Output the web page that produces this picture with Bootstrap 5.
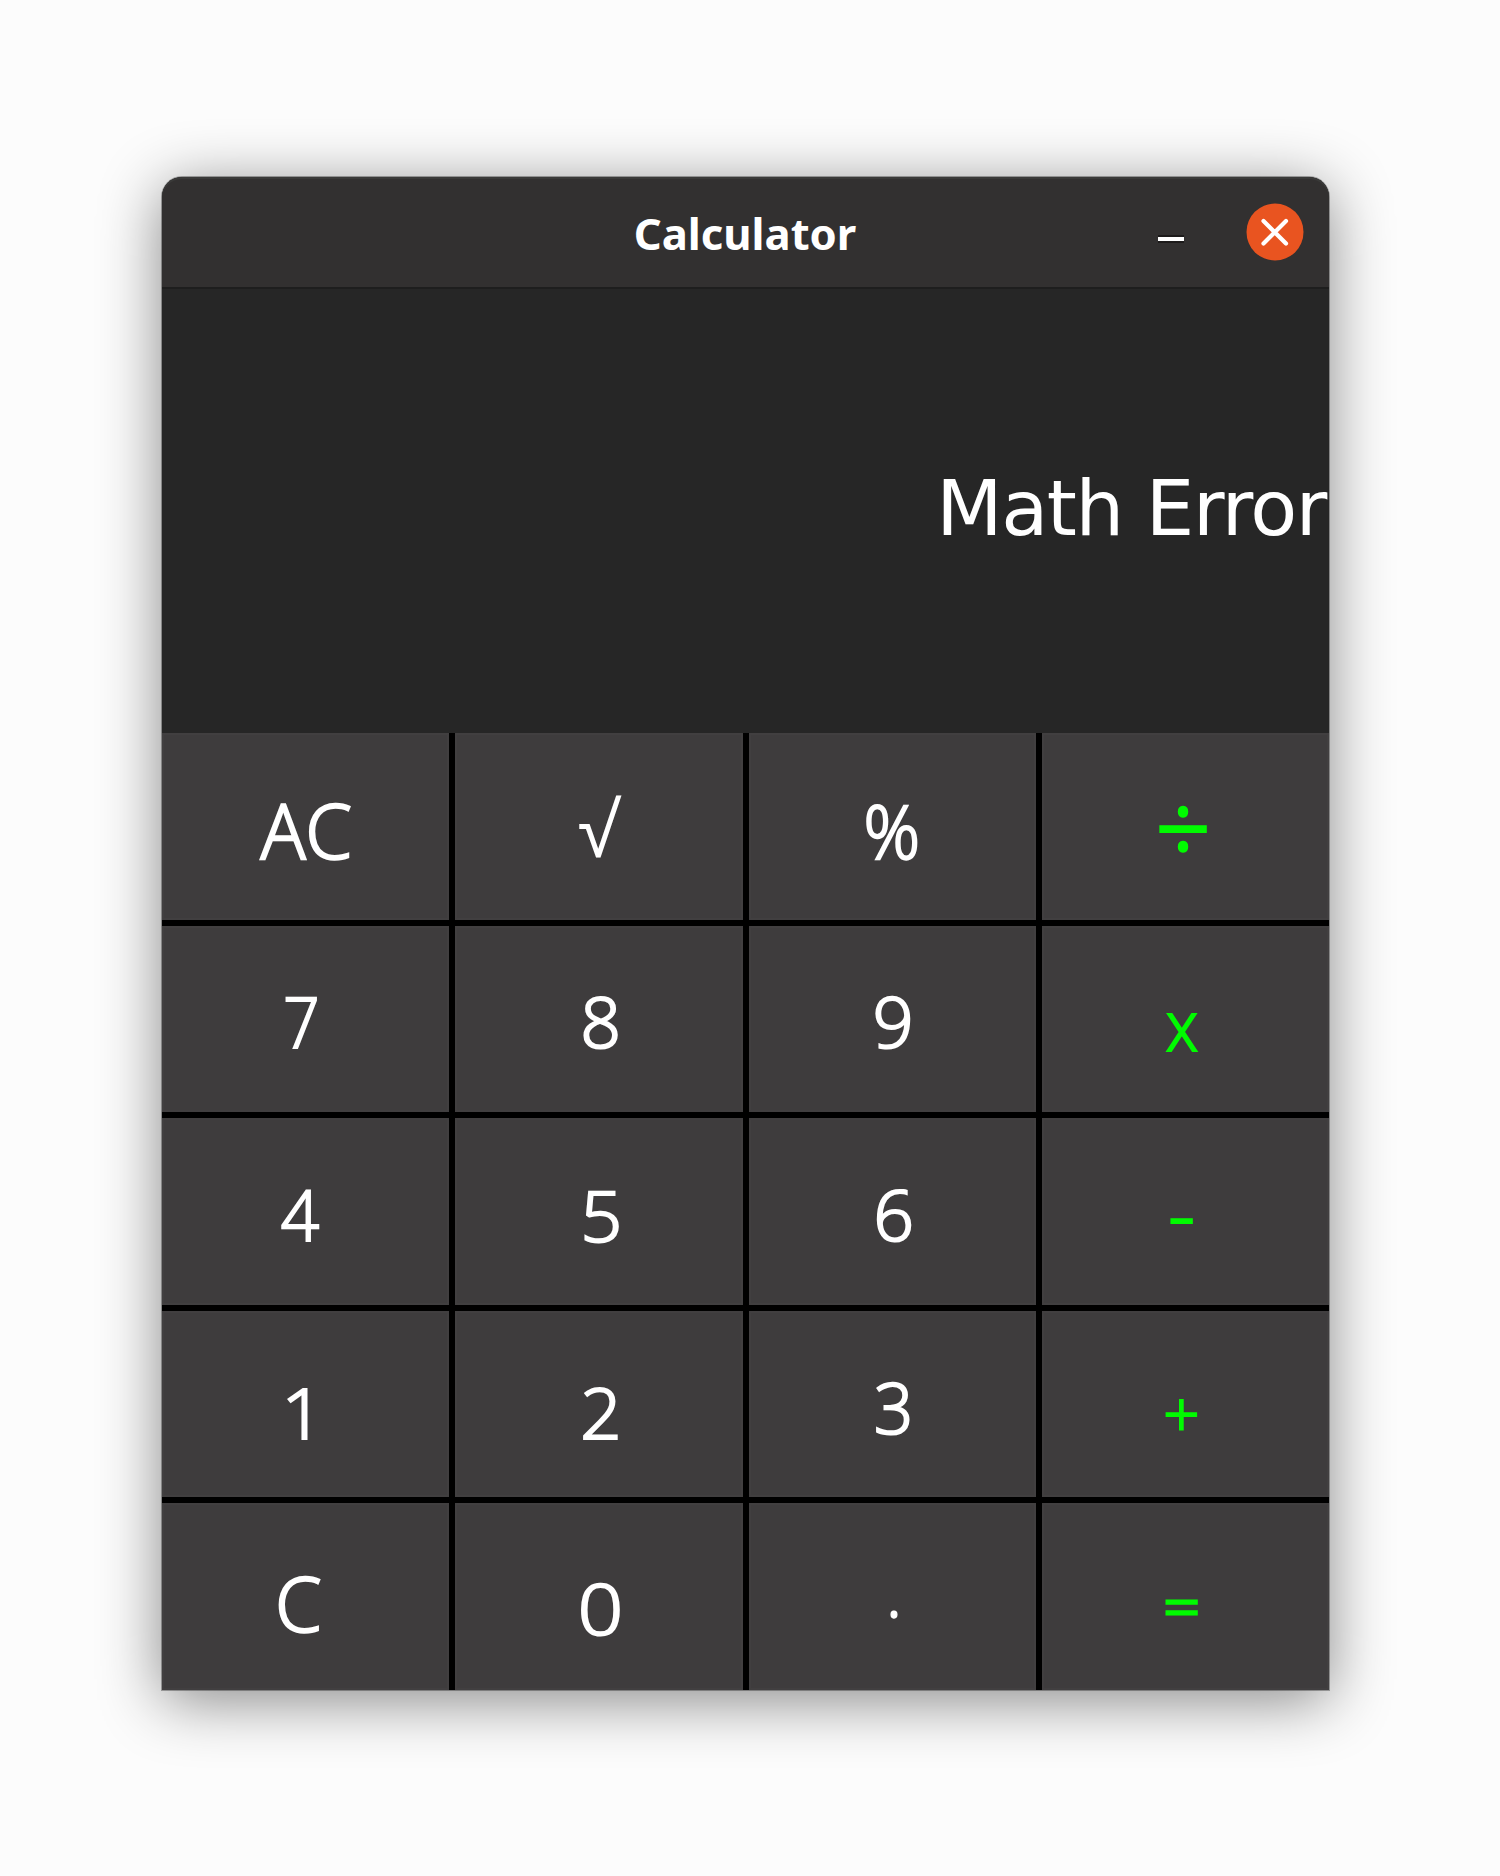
<!DOCTYPE html>
<html lang="en">
<head>
<meta charset="utf-8">
<meta name="viewport" content="width=device-width, initial-scale=1">
<title>Calculator</title>
<link href="https://cdn.jsdelivr.net/npm/bootstrap@5.3.0/dist/css/bootstrap.min.css" rel="stylesheet">
<style>
  body { background: #fcfcfc; padding: 177px 171px 186px 162px; }
  .calc-window { width: 1167px; height: 1513px; background: #262626; border-radius: 20px 20px 0 0;
    box-shadow: 0 0 0 1px rgba(0,0,0,.3), 0 10px 62px rgba(0,0,0,.47); }
  .titlebar { height: 112px; background: #323030; border-bottom: 2px solid #1e1e1e;
    box-shadow: inset 0 2px 0 #3a3a39; border-radius: 20px 20px 0 0; }
  .titlebar h1 { font: 700 43.6px/1 "Noto Sans", sans-serif; padding: 4px 1px 0 0; }
  .window-buttons { right: 25.5px; top: 26px; gap: 62px; }
  .win-min { width: 26px; height: 58px; }
  .win-close { width: 58px; height: 58px; }
  .screen { height: 444px; background: #262626; color: #fff; padding: 0 3px 4px 0;
    font: 76.8px/1 "DejaVu Sans", sans-serif; letter-spacing: -1.4px; }
  .keypad { display: grid; grid-template-columns: repeat(4, 1fr); grid-template-rows: repeat(5, 1fr);
    gap: 6px; height: 957px; background: #000; }
  .key { background: #3e3c3d; border-radius: 0; border: 0; padding: 0; color: #fff; overflow: hidden;
    font: 300 73px/1 "Open Sans", sans-serif; box-shadow: inset 0 0 0 2px #413f40; }
  .key span { display: block; -webkit-text-stroke: 2.3px currentColor; stroke-linejoin: round; }
  .key.op { color: #00fb00; }
  .k-ac span { transform: translate(.6px, 2.8px) scale(1.02, 1.04); }
  .k-root span { transform: translate(-.6px, .8px) scale(.97, 1); -webkit-text-stroke-width: 2px; }
  .k-pct span { transform: translate(-.6px, 3.6px) scale(.96, 1); }
  .k-div span { transform: translate(-2.8px, .2px) scale(1.3, 1.36); -webkit-text-stroke-width: 2.6px; }
  .k-7 span { transform: translate(-4.5px, 1.7px) scale(.87, .96); }
  .k-8 span { transform: translate(1.9px, 2.5px) scale(.97, .96); }
  .k-9 span { transform: translate(1.4px, 2.2px) scale(.98, .95); }
  .k-mul span { transform: translate(-3.2px, 4.6px) scale(.88, .97); }
  .k-4 span { transform: translate(-5.8px, 2.3px) scale(.92, .97); }
  .k-5 span { transform: translate(2.4px, 2.5px) scale(1, .97); }
  .k-6 span { transform: translate(1.9px, 2.5px) scale(.97, .96); }
  .k-sub span { transform: translate(-4px, .2px) scale(1.16, 1.15); -webkit-text-stroke-width: 1.6px; }
  .k-1 span { transform: translate(-3px, 6.8px) scale(1.02, .96); }
  .k-2 span { transform: translate(2px, 7px) scale(.99, .95); }
  .k-3 span { transform: translate(1.8px, 1.9px) scale(.94, .97); }
  .k-add span { transform: translate(-4.4px, 8px) scale(.87, .87); }
  .k-c span { transform: translate(-7.4px, 6.2px) scale(1.02, 1.04); }
  .k-0 span { transform: translate(1.6px, 11px) scale(1.09, .96); }
  .k-dot span { transform: translate(1.9px, -9.5px) scale(1, 1.05); -webkit-text-stroke-width: 1.2px; }
  .k-eq span { transform: translate(-4.2px, 8.8px) scale(.86, .72); -webkit-text-stroke-width: 4px; }
</style>
</head>
<body>
<main class="calc-window d-flex flex-column">
  <header class="titlebar position-relative d-flex align-items-center justify-content-center flex-shrink-0">
    <h1 class="m-0 text-white">Calculator</h1>
    <div class="window-buttons position-absolute d-flex align-items-center">
      <svg class="win-min" viewBox="0 0 26 58" role="img" aria-label="Minimize"><rect x="-1" y="32" width="28" height="8" fill="#1d1b1b"/><rect x="0" y="34" width="26" height="4" fill="#fff"/></svg>
      <svg class="win-close" viewBox="0 0 58 58" role="img" aria-label="Close"><circle cx="29" cy="29" r="28.5" fill="#e95420"/><path d="M17.5 18L40 40.500M40 18L17.5 40.500" stroke="#fff" stroke-width="4.2" stroke-linecap="round"/></svg>
    </div>
  </header>
  <section class="screen d-flex align-items-center justify-content-end flex-shrink-0">Math Error</section>
  <section class="keypad">
    <button class="key btn d-flex align-items-center justify-content-center k-ac"><span>AC</span></button>
    <button class="key btn d-flex align-items-center justify-content-center k-root"><span>√</span></button>
    <button class="key btn d-flex align-items-center justify-content-center k-pct"><span>%</span></button>
    <button class="key btn d-flex align-items-center justify-content-center op k-div"><span>÷</span></button>
    <button class="key btn d-flex align-items-center justify-content-center k-7"><span>7</span></button>
    <button class="key btn d-flex align-items-center justify-content-center k-8"><span>8</span></button>
    <button class="key btn d-flex align-items-center justify-content-center k-9"><span>9</span></button>
    <button class="key btn d-flex align-items-center justify-content-center op k-mul"><span>x</span></button>
    <button class="key btn d-flex align-items-center justify-content-center k-4"><span>4</span></button>
    <button class="key btn d-flex align-items-center justify-content-center k-5"><span>5</span></button>
    <button class="key btn d-flex align-items-center justify-content-center k-6"><span>6</span></button>
    <button class="key btn d-flex align-items-center justify-content-center op k-sub"><span>-</span></button>
    <button class="key btn d-flex align-items-center justify-content-center k-1"><span>1</span></button>
    <button class="key btn d-flex align-items-center justify-content-center k-2"><span>2</span></button>
    <button class="key btn d-flex align-items-center justify-content-center k-3"><span>3</span></button>
    <button class="key btn d-flex align-items-center justify-content-center op k-add"><span>+</span></button>
    <button class="key btn d-flex align-items-center justify-content-center k-c"><span>C</span></button>
    <button class="key btn d-flex align-items-center justify-content-center k-0"><span>0</span></button>
    <button class="key btn d-flex align-items-center justify-content-center k-dot"><span>.</span></button>
    <button class="key btn d-flex align-items-center justify-content-center op k-eq"><span>=</span></button>
  </section>
</main>
<script src="https://cdn.jsdelivr.net/npm/bootstrap@5.3.0/dist/js/bootstrap.bundle.min.js"></script>
</body>
</html>
